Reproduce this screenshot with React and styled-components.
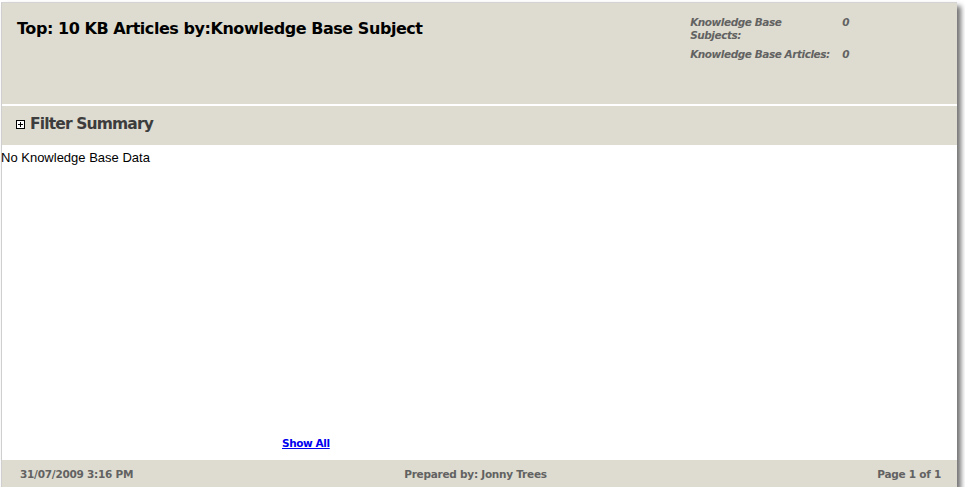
import React from 'react';
import styled, { createGlobalStyle } from 'styled-components';

// palette
const band = '#dedcd0';
const muted = '#626262';

const GlobalStyle = createGlobalStyle`
  html, body {
    margin: 0;
    padding: 0;
    background: #ffffff;
  }
  body {
    padding-top: 2px;
    font-family: "DejaVu Sans", Verdana, sans-serif;
  }
`;

// styled components
const Frame = styled.div`
  width: 956px;
  height: 485px;
  margin-left: 1px;
  display: flex;
  flex-direction: column;
  background: #ffffff;
  border-top: 1px solid #d4d4d4;
  border-left: 1px solid #cfcfcf;
  box-sizing: border-box;
  box-shadow: 4px 4px 5px rgba(0, 0, 0, 0.55);
`;

const Header = styled.div`
  height: 101px;
  flex: none;
  background: ${band};
  display: flex;
  justify-content: space-between;
  align-items: flex-start;
  border-bottom: 2px solid #ffffff;
`;

const Title = styled.h1`
  margin: 0;
  padding: 16px 0 0 15px;
  font-size: 16px;
  line-height: 20px;
  font-weight: bold;
  color: #000000;
  letter-spacing: -0.45px;
`;

const Stats = styled.div`
  margin: 13px 108px 0 0;
  display: grid;
  grid-template-columns: 152px auto;
  row-gap: 6px;
  font-size: 10.5px;
  line-height: 13px;
  font-style: italic;
  font-weight: bold;
  color: ${muted};
  letter-spacing: -0.45px;
`;

const StatLabel = styled.div`
  width: 110px;
`;

const FilterBar = styled.div`
  height: 39px;
  flex: none;
  background: ${band};
  display: flex;
  align-items: center;
  gap: 5px;
  padding: 0 0 3px 14px;
  box-sizing: border-box;
`;

const ExpandBox = styled.span`
  width: 9px;
  height: 9px;
  display: inline-flex;
  margin-top: 1px;
`;

const FilterTitle = styled.span`
  font-size: 15.5px;
  font-weight: bold;
  color: #3d3d3d;
  letter-spacing: -0.85px;
`;

const Content = styled.div`
  flex: 1;
  display: flex;
  flex-direction: column;
  justify-content: space-between;
`;

const Empty = styled.div`
  font-family: "Liberation Sans", Arial, sans-serif;
  font-size: 13px;
  line-height: 15px;
  padding-top: 5px;
  margin-left: -1px;
  color: #000000;
`;

const ShowAll = styled.a`
  align-self: flex-start;
  margin: 0 0 11px 280px;
  font-size: 10.5px;
  font-weight: bold;
  color: #0000ee;
  text-decoration: underline;
  letter-spacing: -0.4px;
  cursor: pointer;
`;

const Footer = styled.div`
  height: 27px;
  flex: none;
  background: ${band};
  display: grid;
  grid-template-columns: 1fr auto 1fr;
  align-items: center;
  padding: 0 16px 0 18px;
  font-size: 10.5px;
  font-weight: bold;
  color: ${muted};
  letter-spacing: -0.25px;
`;

const FooterCell = styled.div`
  text-align: ${props => props.align || 'left'};
  margin-right: ${props => props.shift || 0}px;
`;

const PlusIcon = () => (
  <ExpandBox>
    <svg width="9" height="9" viewBox="0 0 9 9">
      <rect x="0.5" y="0.5" width="8" height="8" fill="#ffffff" stroke="#000000" />
      <path d="M2 4.5h5M4.5 2v5" stroke="#000000" />
    </svg>
  </ExpandBox>
);

const App = () => (
  <>
    <GlobalStyle />
    <Frame>
      <Header>
        <Title>Top: 10 KB Articles by:Knowledge Base Subject</Title>
        <Stats>
          <StatLabel>Knowledge Base Subjects:</StatLabel>
          <div>0</div>
          <div>Knowledge Base Articles:</div>
          <div>0</div>
        </Stats>
      </Header>
      <FilterBar>
        <PlusIcon />
        <FilterTitle>Filter Summary</FilterTitle>
      </FilterBar>
      <Content>
        <Empty>No Knowledge Base Data</Empty>
        <ShowAll>Show All</ShowAll>
      </Content>
      <Footer>
        <FooterCell>31/07/2009 3:16 PM</FooterCell>
        <FooterCell align="center" shift={10}>Prepared by: Jonny Trees</FooterCell>
        <FooterCell align="right">Page 1 of 1</FooterCell>
      </Footer>
    </Frame>
  </>
);

export default App;
